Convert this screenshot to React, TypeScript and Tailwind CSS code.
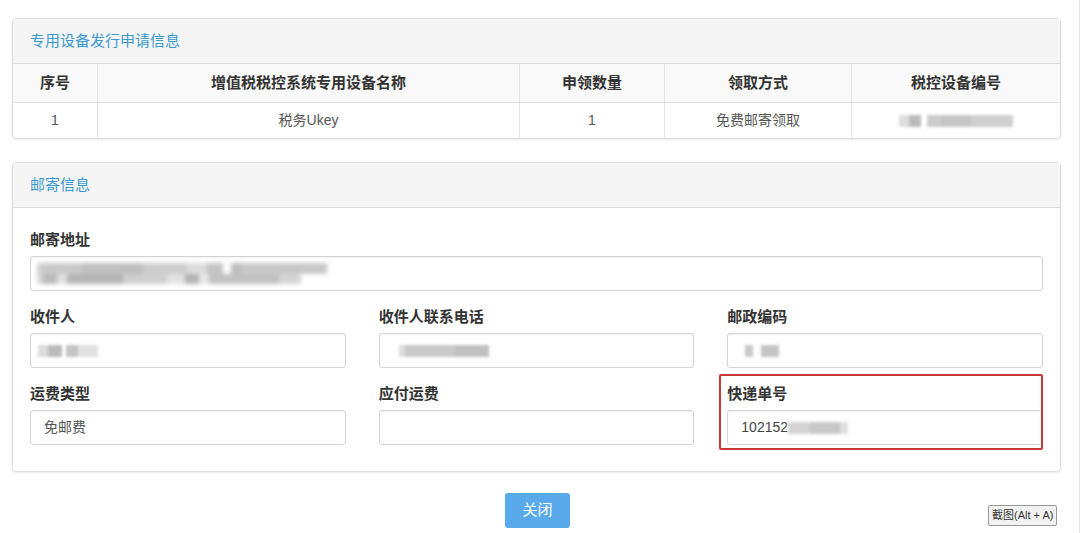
const font = { fontFamily: '"Liberation Sans", "Noto Sans CJK SC", sans-serif' };

function Blur({ blocks, className = "" }: { blocks: [number, number, string][]; className?: string }) {
  // redacted text: row of grey blocks, blurred
  return (
    <div className={`flex items-center blur-[1.5px] ${className}`}>
      {blocks.map(([w, ml, c], i) => (
        <span key={i} style={{ width: w, marginLeft: ml }} className={`h-[12px] ${c}`} />
      ))}
    </div>
  );
}

function Field({ label, children }: { label: string; children?: React.ReactNode }) {
  return (
    <div>
      <div className="h-[42px] pt-[16px] text-[15px] leading-[20px] font-bold text-[#333]">{label}</div>
      <div className="flex h-[35px] items-center rounded-[3px] border border-[#d4d4d4] bg-white px-[13px] text-[14px] text-[#555] shadow-[inset_0_1px_1px_rgba(0,0,0,0.05)]">
        {children}
      </div>
    </div>
  );
}

const cols = ["序号", "增值税税控系统专用设备名称", "申领数量", "领取方式", "税控设备编号"];
const widths = ["w-[85px]", "w-[422px]", "w-[145px]", "w-[187px]", "flex-1"];

export default function App() {
  return (
    <div style={font} className="relative h-[533px] w-[1080px] overflow-hidden bg-white border-r border-[#e6e6e6]">
      <div className="px-[12px] pt-[18px] pr-[18px]">
        {/* 申请信息 */}
        <div className="rounded-[4px] border border-[#dddddd] shadow-[0_1px_2px_rgba(0,0,0,0.08)]">
          <div className="flex h-[45px] items-center border-b border-[#dddddd] bg-[#f5f5f5] pl-[17px] text-[15px] text-[#3a9ad0]">
            专用设备发行申请信息
          </div>
          <div className="flex h-[39px] border-b border-[#e3e3e3] bg-[#f9f9f9] text-[15px] font-bold text-[#333]">
            {cols.map((c, i) => (
              <div key={c} className={`${widths[i]} flex items-center justify-center ${i < 4 ? "border-r border-[#e3e3e3]" : ""}`}>
                {c}
              </div>
            ))}
          </div>
          <div className="flex h-[35px] text-[14px] text-[#555]">
            <div className="flex w-[85px] items-center justify-center border-r border-[#e3e3e3]">1</div>
            <div className="flex w-[422px] items-center justify-center border-r border-[#e3e3e3]">税务Ukey</div>
            <div className="flex w-[145px] items-center justify-center border-r border-[#e3e3e3]">1</div>
            <div className="flex w-[187px] items-center justify-center border-r border-[#e3e3e3]">免费邮寄领取</div>
            <div className="flex flex-1 items-center justify-center">
              <Blur blocks={[[10, 0, "bg-[#ddd]"], [12, 0, "bg-[#bbb]"], [14, 6, "bg-[#ccc]"], [30, 0, "bg-[#c6c6c6]"], [42, 0, "bg-[#cfcfcf]"]]} />
            </div>
          </div>
        </div>

        {/* 邮寄信息 */}
        <div className="mt-[23px] rounded-[4px] border border-[#dddddd] shadow-[0_1px_2px_rgba(0,0,0,0.08)]">
          <div className="flex h-[45px] items-center border-b border-[#dddddd] bg-[#f5f5f5] pl-[17px] text-[15px] text-[#3a9ad0]">
            邮寄信息
          </div>
          <div className="px-[17px] pt-[6px] pb-[26px]">
            <Field label="邮寄地址">
              <div className="-ml-[7px] flex flex-col blur-[2px]">
                <div className="flex">
                  <span className="h-[11px] w-[6px] bg-[#d0d0d0]" />
                  <span className="h-[11px] w-[40px] bg-[#c9c9c9]" />
                  <span className="h-[11px] w-[60px] bg-[#bfbfbf]" />
                  <span className="h-[11px] w-[44px] bg-[#cdcdcd]" />
                  <span className="h-[11px] w-[20px] bg-[#dcdcdc]" />
                  <span className="h-[11px] w-[16px] bg-[#c4c4c4]" />
                  <span className="ml-[8px] h-[11px] w-[10px] bg-[#bdbdbd]" />
                  <span className="h-[11px] w-[86px] bg-[#c8c8c8]" />
                </div>
                <div className="flex">
                  <span className="h-[10px] w-[6px] bg-[#d6d6d6]" />
                  <span className="h-[10px] w-[14px] bg-[#b9b9b9]" />
                  <span className="h-[10px] w-[10px] bg-[#e0e0e0]" />
                  <span className="h-[10px] w-[56px] bg-[#b5b5b5]" />
                  <span className="h-[10px] w-[44px] bg-[#cfcfcf]" />
                  <span className="h-[10px] w-[18px] bg-[#e2e2e2]" />
                  <span className="h-[10px] w-[14px] bg-[#b3b3b3]" />
                  <span className="h-[10px] w-[10px] bg-[#e6e6e6]" />
                  <span className="h-[10px] w-[70px] bg-[#c2c2c2]" />
                  <span className="h-[10px] w-[22px] bg-[#d4d4d4]" />
                </div>
              </div>
            </Field>
            <div className="grid grid-cols-3 gap-x-[33px]">
              <Field label="收件人">
                <Blur blocks={[[10, -6, "bg-[#ddd]"], [14, 0, "bg-[#bbb]"], [12, 4, "bg-[#c4c4c4]"], [20, 0, "bg-[#e2e2e2]"]]} />
              </Field>
              <Field label="收件人联系电话">
                <Blur blocks={[[6, 6, "bg-[#ddd]"], [50, 0, "bg-[#c8c8c8]"], [34, 0, "bg-[#c1c1c1]"]]} />
              </Field>
              <Field label="邮政编码">
                <Blur blocks={[[8, 4, "bg-[#c8c8c8]"], [18, 8, "bg-[#c4c4c4]"]]} />
              </Field>
              <Field label="运费类型">免邮费</Field>
              <Field label="应付运费" />
              <div className="relative">
                <div className="pointer-events-none absolute top-[6px] right-0 -bottom-[5px] -left-[8px] z-10 rounded-[2px] border-[2px] border-[#c83a38]" />
                <Field label="快递单号">
                  <span className="text-[#444]">102152</span>
                  <Blur blocks={[[22, 0, "bg-[#d4d4d4]"], [30, 0, "bg-[#c8c8c8]"], [8, 0, "bg-[#e0e0e0]"]]} />
                </Field>
              </div>
            </div>
          </div>
        </div>

        <div className="flex justify-center pt-[21px] pl-[2px]">
          <button className="h-[35px] w-[65px] rounded-[3px] bg-[#58aaeb] text-[15px] text-white">关闭</button>
        </div>
      </div>

      <div className="absolute top-[505px] left-[988px] rounded-[2px] border border-[#999] bg-[#f2f2f2] px-[3px] text-[11px] leading-[19px] text-[#333]">
        截图(Alt + A)
      </div>
    </div>
  );
}
